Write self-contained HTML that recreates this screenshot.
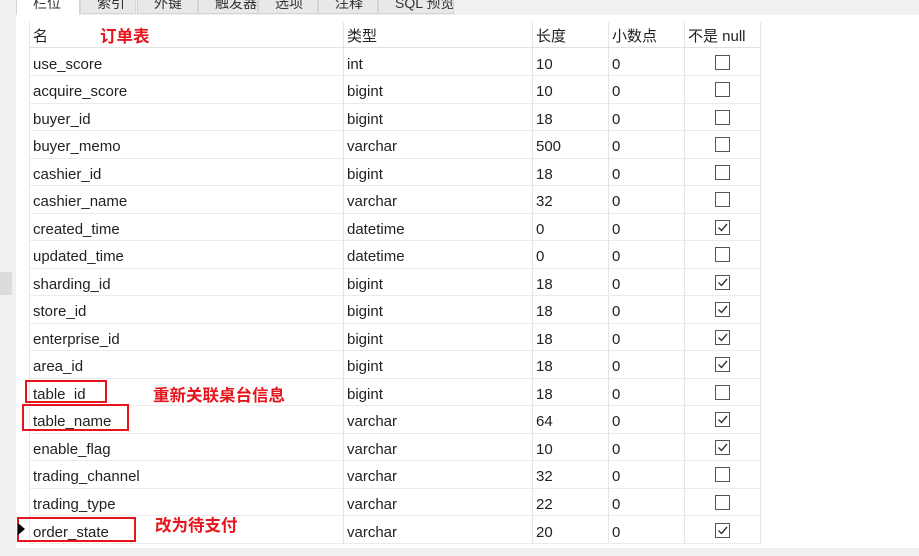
<!DOCTYPE html><html><head><meta charset="utf-8"><style>
*{margin:0;padding:0;box-sizing:border-box}
body{width:919px;height:556px;background:#f0f0f0;position:relative;overflow:hidden;font-family:"Liberation Sans","Noto Sans CJK SC",sans-serif;font-size:15px;color:#222}
.a{position:absolute}
.tab{position:absolute;top:-6px;height:20px;background:#e8e8e8;border:1px solid #d4d4d4;font-size:14px;color:#333;padding-left:16px;line-height:16px;white-space:nowrap;overflow:hidden}
.grid{position:absolute;left:16px;top:15px;width:903px;height:533px;background:#fff}
.row{position:absolute;left:29px;width:731px;height:27.5px;border-bottom:1px solid #ebebeb}
.c{position:absolute;top:2px;line-height:27px;white-space:nowrap}
.vl{position:absolute;width:1px;background:#e6e6e6;top:22px;height:522px}
.cb{position:absolute;left:686px;top:6px;width:15px;height:15px;border:1px solid #555;background:#fff}
.red{color:#e8141b;font-weight:bold;font-size:16.5px}
.box{position:absolute;border:2px solid #e8141b}
</style></head><body>
<div class="tab" style="left:16px;width:64px;background:#fff;border-bottom:none;height:22px">栏位</div>
<div class="tab" style="left:80px;width:56px">索引</div>
<div class="tab" style="left:137px;width:61px">外键</div>
<div class="tab" style="left:198px;width:60px">触发器</div>
<div class="tab" style="left:258px;width:60px">选项</div>
<div class="tab" style="left:318px;width:60px">注释</div>
<div class="tab" style="left:378px;width:76px">SQL 预览</div>
<div class="grid"></div>
<div class="a" style="left:0;top:272px;width:12px;height:23px;background:#dcdcdc"></div>
<div class="vl" style="left:29px"></div><div class="vl" style="left:343px"></div><div class="vl" style="left:532px"></div><div class="vl" style="left:608px"></div><div class="vl" style="left:684px"></div><div class="vl" style="left:760px"></div>
<div class="row" style="top:21px;height:27px;border-bottom:1px solid #e0e0e0"><div class="c" style="left:4px">名</div><div class="c" style="left:318px">类型</div><div class="c" style="left:507px">长度</div><div class="c" style="left:583px">小数点</div><div class="c" style="left:659px">不是 null</div></div>
<div id="rows"></div>
<div class="a red" style="left:100px;top:23px">订单表</div>
<div class="a red" style="left:153px;top:382px">重新关联桌台信息</div>
<div class="a red" style="left:155px;top:512px">改为待支付</div>
<div class="box" style="left:25px;top:380px;width:82px;height:23px"></div>
<div class="box" style="left:22px;top:404px;width:107px;height:27px"></div>
<div class="box" style="left:17px;top:517px;width:119px;height:25px"></div>
<div class="a" style="left:18px;top:523px;width:0;height:0;border-top:6px solid transparent;border-bottom:6px solid transparent;border-left:7px solid #000"></div>
<script>
var d=[["use_score","int",10,0],["acquire_score","bigint",10,0],["buyer_id","bigint",18,0],["buyer_memo","varchar",500,0],["cashier_id","bigint",18,0],["cashier_name","varchar",32,0],["created_time","datetime",0,1],["updated_time","datetime",0,0],["sharding_id","bigint",18,1],["store_id","bigint",18,1],["enterprise_id","bigint",18,1],["area_id","bigint",18,1],["table_id","bigint",18,0],["table_name","varchar",64,1],["enable_flag","varchar",10,1],["trading_channel","varchar",32,0],["trading_type","varchar",22,0],["order_state","varchar",20,1]];
var h="";d.forEach(function(r,i){var t=48.5+i*27.53;h+='<div class="row" style="top:'+t+'px"><div class="c" style="left:4px">'+r[0]+'</div><div class="c" style="left:318px">'+r[1]+'</div><div class="c" style="left:507px">'+r[2]+'</div><div class="c" style="left:583px">0</div><div class="cb">'+(r[3]?'<svg width="13" height="13" style="position:absolute;left:0;top:0"><path d="M2.5 6.5L5.5 9.5L11 3" stroke="#333" stroke-width="1.4" fill="none"/></svg>':'')+'</div></div>'});
document.getElementById("rows").innerHTML=h;
</script>
</body></html>
